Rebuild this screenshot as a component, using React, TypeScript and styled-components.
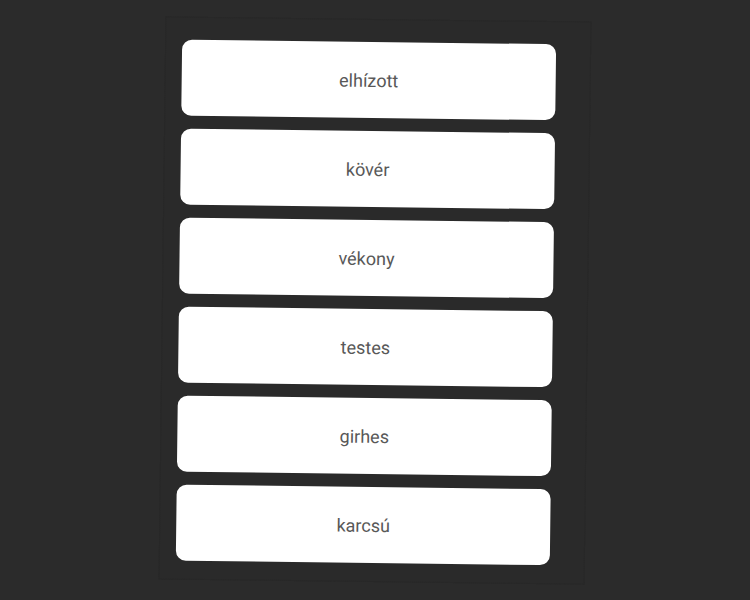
import React from "react";
import styled, { createGlobalStyle } from "styled-components";

const words = ["elhízott", "kövér", "vékony", "testes", "girhes", "karcsú"];

export default function App() {
  return (
    <>
      <GlobalStyle />
      <Stage>
        <Panel>
          {words.map((word) => (
            <Choice key={word}>{word}</Choice>
          ))}
        </Panel>
      </Stage>
    </>
  );
}

const GlobalStyle = createGlobalStyle`
  html, body {
    margin: 0;
    padding: 0;
    background: #2b2b2b;
  }
  body {
    font-family: Roboto, "Liberation Sans", sans-serif;
  }
`;

const Stage = styled.div`
  width: 750px;
  height: 600px;
  display: flex;
  align-items: center;
  justify-content: center;
  overflow: hidden;
`;

const Panel = styled.div`
  box-sizing: border-box;
  width: 426px;
  height: 563px;
  padding: 22px 34px 19px 16px;
  display: flex;
  flex-direction: column;
  gap: 13px;
  background: #2a2a2a;
  border: 1px solid #282828;
  transform: rotate(0.7deg);
`;

const Choice = styled.div`
  height: 76px;
  flex-shrink: 0;
  display: flex;
  align-items: center;
  justify-content: center;
  background: #ffffff;
  border-radius: 10px;
  color: #585858;
  font-size: 18px;
  font-weight: 400;
`;
